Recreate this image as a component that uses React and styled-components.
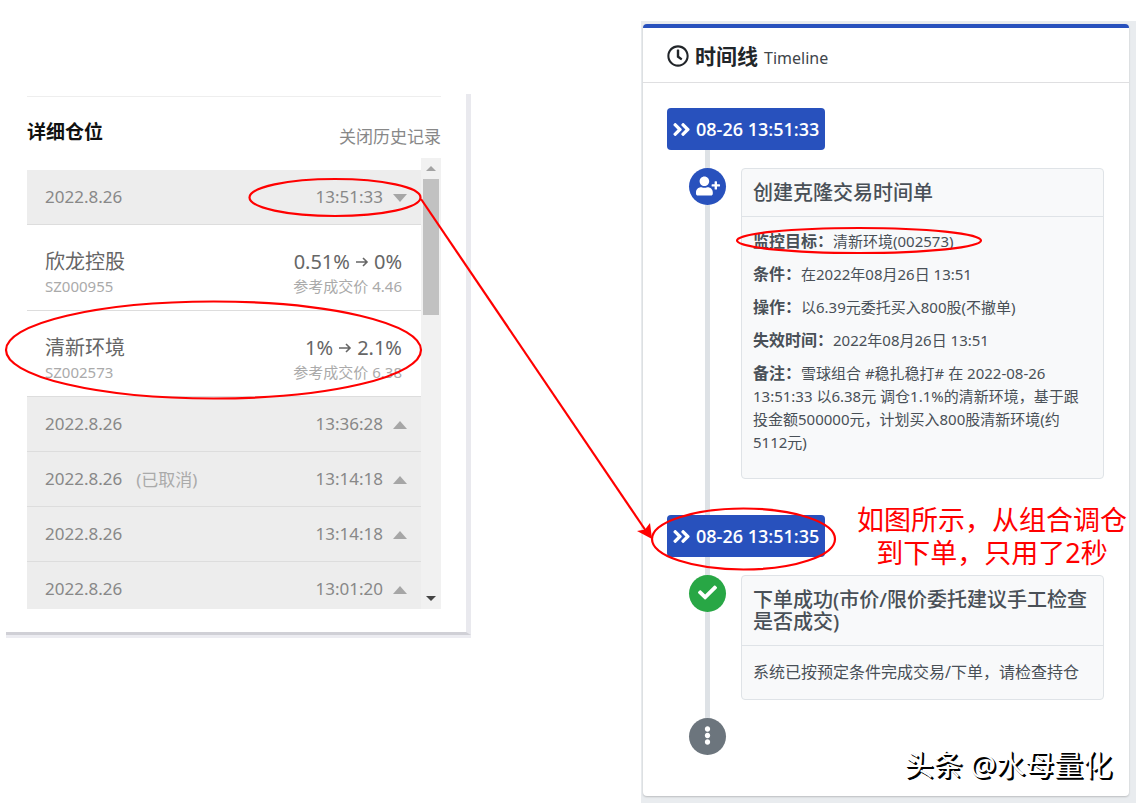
import React from 'react';
import styled, { createGlobalStyle } from 'styled-components';
import { FaRegClock, FaAngleDoubleRight, FaUserPlus, FaCheck, FaEllipsisV } from 'react-icons/fa';

const GlobalStyle = createGlobalStyle`
  * {
    box-sizing: border-box;
  }
  body {
    margin: 0;
    background: #fff;
    font-family: "Noto Sans", "Noto Sans CJK SC", sans-serif;
  }
  h1, h2, h3, p, ul {
    margin: 0;
    padding: 0;
  }
`;

const history = [
  {
    date: '2022.8.26',
    time: '13:51:33',
    open: true,
    stocks: [
      { name: '欣龙控股', code: 'SZ000955', from: '0.51%', to: '0%', price: '4.46' },
      { name: '清新环境', code: 'SZ002573', from: '1%', to: '2.1%', price: '6.38' },
    ],
  },
  { date: '2022.8.26', time: '13:36:28' },
  { date: '2022.8.26', time: '13:14:18', note: '(已取消)' },
  { date: '2022.8.26', time: '13:14:18' },
  { date: '2022.8.26', time: '13:01:20' },
];

const orderInfo = [
  { label: '监控目标：', value: '清新环境(002573)' },
  { label: '条件：', value: '在2022年08月26日 13:51' },
  { label: '操作：', value: '以6.39元委托买入800股(不撤单)' },
  { label: '失效时间：', value: '2022年08月26日 13:51' },
  {
    label: '备注：',
    value: '雪球组合 #稳扎稳打# 在 2022-08-26 13:51:33 以6.38元 调仓1.1%的清新环境，基于跟投金额500000元，计划买入800股清新环境(约5112元)',
  },
];

const Page = styled.main`
  position: relative;
  display: grid;
  grid-template-columns: 465fr 170fr 495fr;
  align-items: start;
  padding-left: 6px;
`;

/* ---- positions ---- */

const Positions = styled.section`
  margin-top: 94px;
  padding: 2px 25px 23px 21px;
  border-right: 5px solid #e9e9ee;
  border-bottom: 3px solid #d0d0d6;
  box-shadow: 0 3px 0 #ececf1;
`;

const PositionsHead = styled.header`
  display: flex;
  justify-content: space-between;
  align-items: flex-end;
  height: 62px;
  padding-bottom: 9px;
  border-top: 1px solid #eee;
`;

const PositionsTitle = styled.h2`
  padding-bottom: 4px;
  font-size: 19px;
  line-height: 26px;
  color: #111;
`;

const ToggleLink = styled.a`
  font-size: 17px;
  line-height: 24px;
  color: #888;
  text-decoration: none;
`;

const Scroller = styled.div`
  display: flex;
  height: 451px;
  overflow: hidden;
`;

const HistoryList = styled.ul`
  flex: 1;
  padding-top: 12px;
  list-style: none;
`;

const HistoryRow = styled.button`
  display: flex;
  align-items: center;
  width: 100%;
  height: 55px;
  padding: 0 14px 2px 18px;
  border: 0;
  border-bottom: 1px solid #ddd;
  background: #ededed;
  font: inherit;
  font-size: 17px;
  color: #888;
  text-align: left;
`;

const RowNote = styled.span`
  margin-left: 14px;
  color: #aaa;
`;

const RowTime = styled.time`
  margin-left: auto;
`;

const Caret = styled.svg`
  width: 14px;
  height: 8px;
  margin-top: 4px;
  margin-left: 10px;
  fill: #a6a6a6;
  transform: ${({ $open }) => ($open ? 'rotate(180deg)' : 'none')};
`;

const StockRow = styled.div`
  display: flex;
  justify-content: space-between;
  align-items: flex-end;
  height: 86px;
  padding: 0 19px 13px 18px;
  border-bottom: 1px solid #ddd;
`;

const StockCell = styled.div`
  text-align: ${({ $end }) => ($end ? 'right' : 'left')};
`;

const StockMain = styled.div`
  display: flex;
  align-items: center;
  justify-content: flex-end;
  gap: 5px;
  font-size: 20px;
  line-height: 26px;
  color: #666;
`;

const StockName = styled.div`
  font-size: 20px;
  line-height: 26px;
  color: #666;
`;

const StockSub = styled.div`
  font-size: 15px;
  line-height: 22px;
  color: #aaa;
`;

const ScrollTrack = styled.div`
  display: flex;
  flex-direction: column;
  align-items: center;
  width: 20px;
  background: #f1f1f1;
`;

const ScrollArrow = styled.svg`
  width: 20px;
  height: 21px;
  fill: ${({ $dim }) => ($dim ? '#a3a3a3' : '#444')};
`;

const ScrollThumb = styled.div`
  width: 16px;
  height: 136px;
  margin-bottom: auto;
  background: #c1c1c1;
`;

/* ---- timeline ---- */

const TimelinePane = styled.section`
  grid-column: 3;
  margin-top: 21px;
  padding: 3px 7px 7px 2px;
  background: #e9ecef;
`;

const Card = styled.article`
  border-top: 4px solid #2851bd;
  border-radius: 4px;
  background: #fff;
  box-shadow: 0 1px 2px rgba(0, 0, 0, 0.2);
`;

const CardHead = styled.header`
  display: flex;
  align-items: center;
  gap: 6px;
  height: 55px;
  padding: 2px 24px 0;
  border-bottom: 1px solid #dfdfe1;
  color: #212529;
`;

const CardTitle = styled.h1`
  font-size: 21px;
  line-height: 28px;
`;

const CardSubtitle = styled.span`
  padding-top: 3px;
  font-size: 16px;
  line-height: 22px;
  color: #40454a;
`;

const Track = styled.div`
  position: relative;
  display: flex;
  flex-direction: column;
  align-items: flex-start;
  gap: 18px;
  padding: 25px 25px 41px 24px;

  &::before {
    content: '';
    position: absolute;
    top: 25px;
    bottom: 50px;
    left: 62px;
    width: 5px;
    background: #dee2e6;
  }
`;

const TimeBadge = styled.div`
  position: relative;
  display: flex;
  align-items: center;
  gap: 4px;
  height: 42px;
  padding: 0 6px 0 4px;
  border-radius: 4px;
  background: #2851bd;
  font-family: "Open Sans", "Noto Sans", sans-serif;
  font-size: 18px;
  font-weight: 600;
  color: #fff;
`;

const Item = styled.div`
  position: relative;
  display: flex;
  align-items: flex-start;
  gap: 15px;
  align-self: stretch;
  padding-left: 22px;
  margin-bottom: ${({ $last }) => ($last ? '0' : '18px')};
`;

const Dot = styled.span`
  display: flex;
  flex: none;
  align-items: center;
  justify-content: center;
  width: 37px;
  height: 37px;
  padding-bottom: 2px;
  border-radius: 50%;
  background: ${({ $color }) => $color};
  color: #fff;
`;

const Note = styled.div`
  flex: 1;
  border: 1px solid #dfe3e7;
  border-radius: 4px;
  background: #f8f9fa;
  color: #495057;
`;

const NoteTitle = styled.h3`
  padding: 13px 11px 12px;
  border-bottom: 1px solid #dfe3e7;
  font-size: 20px;
  font-weight: 500;
  line-height: 22px;
`;

const NoteBody = styled.div`
  display: flex;
  flex-direction: column;
  gap: 10px;
  padding: 13px 11px 24px;
`;

const Field = styled.p`
  font-size: 15px;
  line-height: 23px;
`;

const FieldLabel = styled.strong`
  font-size: 16px;
  font-weight: 700;
`;

const Plain = styled.p`
  padding: 15px 11px;
  font-size: 16px;
  line-height: 23px;
`;

/* ---- marks drawn over the page ---- */

const Marks = styled.svg`
  position: absolute;
  top: 0;
  left: 0;
  width: 100%;
  height: 803px;
  pointer-events: none;
  fill: none;
  stroke: #f00;
  stroke-width: 2.2;
`;

const Callout = styled.p`
  position: absolute;
  top: 503px;
  right: 9px;
  font-size: 27px;
  line-height: 33px;
  text-align: center;
  color: #f00;
`;

const Watermark = styled.p`
  position: absolute;
  right: 24px;
  bottom: 18px;
  font-size: 29px;
  line-height: 40px;
  color: #fff;
  text-shadow: 1px 1px 0 #000, 2px 2px 0 #000;
`;

function ArrowRight() {
  return (
    <svg width="14" height="12" viewBox="0 0 14 12" fill="none" stroke="#666" strokeWidth="1.6">
      <path d="M1 6h11M8 2l4 4-4 4" />
    </svg>
  );
}

function HistoryEntry({ entry }) {
  return (
    <li>
      <HistoryRow type="button" aria-expanded={!!entry.open}>
        <span>{entry.date}</span>
        {entry.note && <RowNote>{entry.note}</RowNote>}
        <RowTime>{entry.time}</RowTime>
        <Caret $open={entry.open} viewBox="0 0 14 8">
          <path d="M7 0l7 8H0z" />
        </Caret>
      </HistoryRow>
      {(entry.stocks || []).map((stock) => (
        <StockRow key={stock.code}>
          <StockCell>
            <StockName>{stock.name}</StockName>
            <StockSub>{stock.code}</StockSub>
          </StockCell>
          <StockCell $end>
            <StockMain>
              {stock.from}
              <ArrowRight />
              {stock.to}
            </StockMain>
            <StockSub>参考成交价 {stock.price}</StockSub>
          </StockCell>
        </StockRow>
      ))}
    </li>
  );
}

function App() {
  return (
    <>
      <GlobalStyle />
      <Page>
        <Positions>
          <PositionsHead>
            <PositionsTitle>详细仓位</PositionsTitle>
            <ToggleLink href="#history">关闭历史记录</ToggleLink>
          </PositionsHead>
          <Scroller>
            <HistoryList id="history">
              {history.map((entry, index) => (
                <HistoryEntry entry={entry} key={index} />
              ))}
            </HistoryList>
            <ScrollTrack>
              <ScrollArrow $dim viewBox="0 0 20 21">
                <path d="M10 8l5 5H5z" />
              </ScrollArrow>
              <ScrollThumb />
              <ScrollArrow viewBox="0 0 20 21">
                <path d="M10 13l5-5H5z" />
              </ScrollArrow>
            </ScrollTrack>
          </Scroller>
        </Positions>

        <TimelinePane>
          <Card>
            <CardHead>
              <FaRegClock size={22} />
              <CardTitle>时间线</CardTitle>
              <CardSubtitle>Timeline</CardSubtitle>
            </CardHead>
            <Track>
              <TimeBadge>
                <FaAngleDoubleRight size={21} />
                08-26 13:51:33
              </TimeBadge>
              <Item>
                <Dot $color="#2851bd"><FaUserPlus size={24} /></Dot>
                <Note>
                  <NoteTitle>创建克隆交易时间单</NoteTitle>
                  <NoteBody>
                    {orderInfo.map((field) => (
                      <Field key={field.label}>
                        <FieldLabel>{field.label}</FieldLabel>
                        {field.value}
                      </Field>
                    ))}
                  </NoteBody>
                </Note>
              </Item>
              <TimeBadge>
                <FaAngleDoubleRight size={21} />
                08-26 13:51:35
              </TimeBadge>
              <Item $last>
                <Dot $color="#28a745"><FaCheck size={19} /></Dot>
                <Note>
                  <NoteTitle>下单成功(市价/限价委托建议手工检查是否成交)</NoteTitle>
                  <Plain>系统已按预定条件完成交易/下单，请检查持仓</Plain>
                </Note>
              </Item>
              <Item $last>
                <Dot $color="#6c757d"><FaEllipsisV size={19} /></Dot>
              </Item>
            </Track>
          </Card>
        </TimelinePane>

        <Marks viewBox="0 0 1136 803" preserveAspectRatio="none">
          <ellipse cx="335" cy="197.5" rx="85.5" ry="18.5" />
          <ellipse cx="213.5" cy="350" rx="207.5" ry="48.5" />
          <ellipse cx="859" cy="240.5" rx="122" ry="12.5" />
          <ellipse cx="743.5" cy="539" rx="91.5" ry="30.5" />
          <path d="M421 199L646 531" />
          <path d="M652 539L637 531L645 529.5L650 523z" fill="#f00" stroke="none" />
        </Marks>
        <Callout>
          如图所示，从组合调仓
          <br />
          到下单，只用了2秒
        </Callout>
        <Watermark>头条 @水母量化</Watermark>
      </Page>
    </>
  );
}

export default App;
